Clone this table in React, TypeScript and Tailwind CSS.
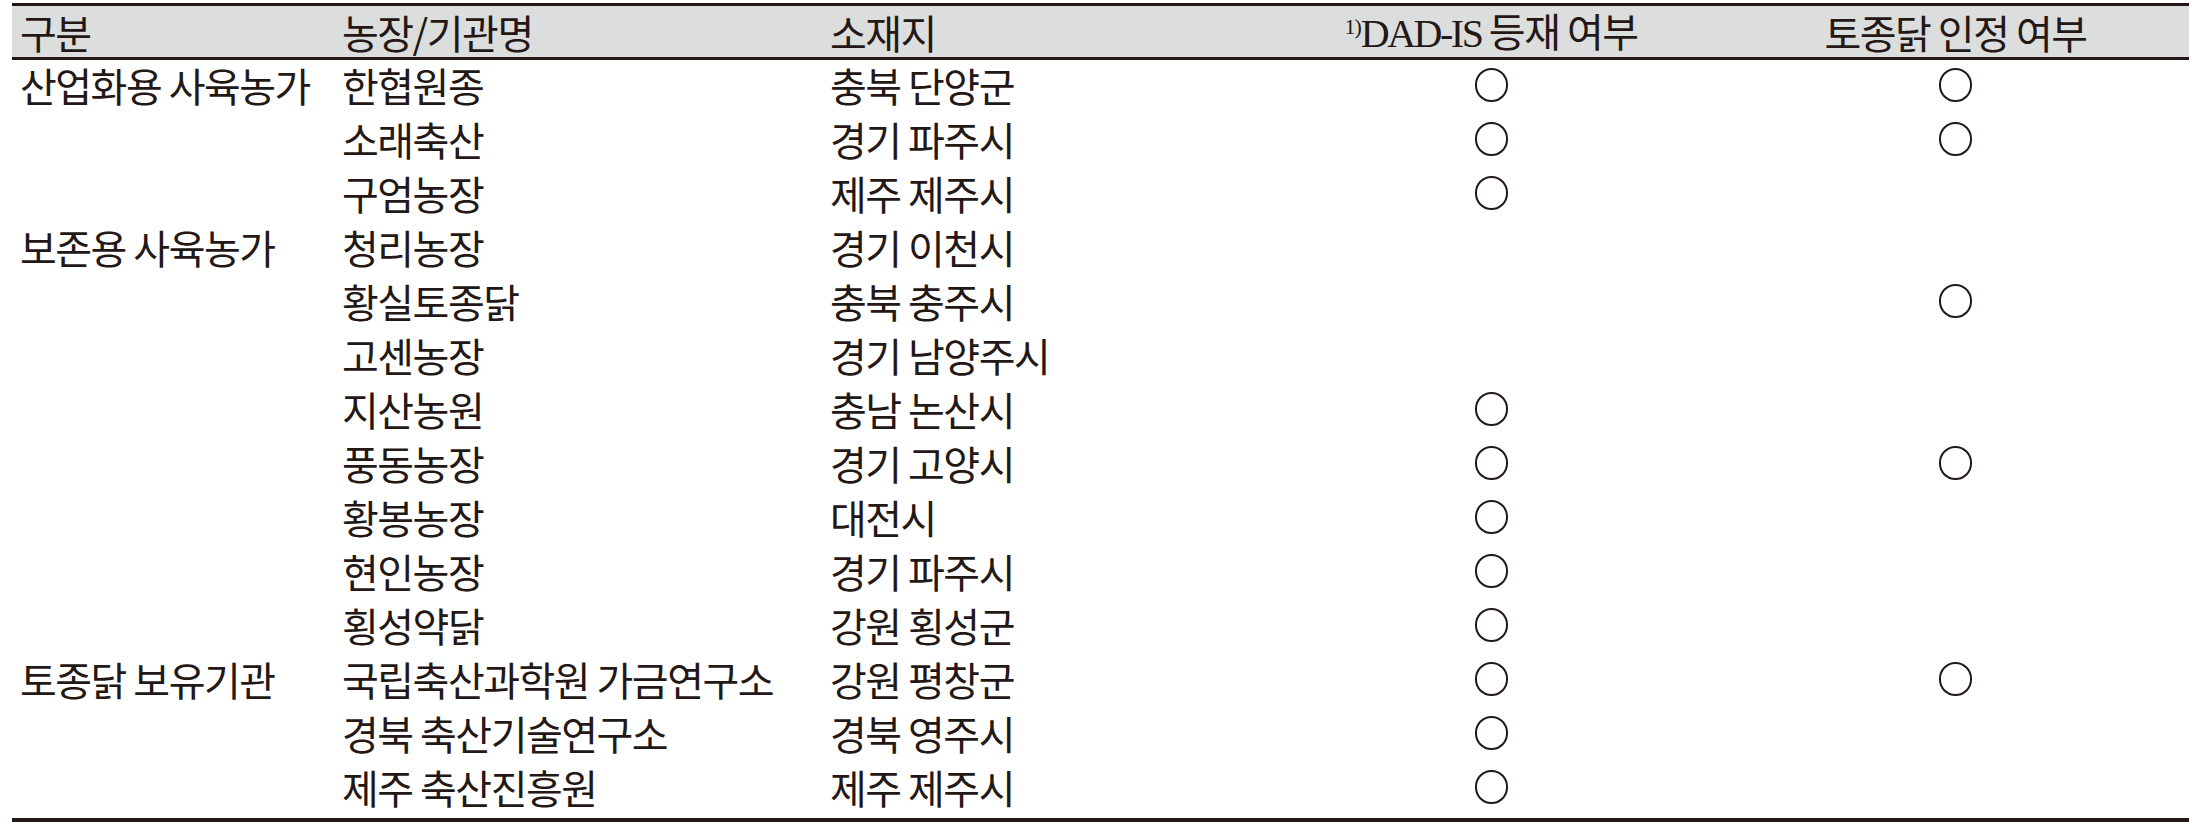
const rows: [string, string, string, boolean, boolean][] = [
  ["산업화용 사육농가", "한협원종", "충북 단양군", true, true],
  ["", "소래축산", "경기 파주시", true, true],
  ["", "구엄농장", "제주 제주시", true, false],
  ["보존용 사육농가", "청리농장", "경기 이천시", false, false],
  ["", "황실토종닭", "충북 충주시", false, true],
  ["", "고센농장", "경기 남양주시", false, false],
  ["", "지산농원", "충남 논산시", true, false],
  ["", "풍동농장", "경기 고양시", true, true],
  ["", "황봉농장", "대전시", true, false],
  ["", "현인농장", "경기 파주시", true, false],
  ["", "횡성약닭", "강원 횡성군", true, false],
  ["토종닭 보유기관", "국립축산과학원 가금연구소", "강원 평창군", true, true],
  ["", "경북 축산기술연구소", "경북 영주시", true, false],
  ["", "제주 축산진흥원", "제주 제주시", true, false],
];

const cols = "grid grid-cols-[322px_488px_438px_462px_1fr]";

const Circle = () => (
  <span className="block w-[33px] h-[34px] rounded-full border-2 border-[#231815]" />
);

export default function App() {
  return (
    <div className="w-[2198px] h-[826px] bg-white font-['Noto_Sans_CJK_KR',sans-serif] text-[40px] text-[#231815] tracking-[-1.5px]">
      <div className="ml-[12px] mr-[9px] pt-[3px]">
        {/* header */}
        <div
          className={`${cols} h-[57px] bg-[#dcdddd] border-t-[3px] border-b-[3px] border-[#231815] leading-none items-center`}
        >
          <div className="pl-2">구분</div>
          <div className="pl-2">농장/기관명</div>
          <div className="pl-2">소재지</div>
          <div className="text-center whitespace-nowrap">
            <span className="relative -top-[13px] text-[22px] font-['Liberation_Serif',serif] tracking-[-1px]">
              1)
            </span>
            <span className="font-['Liberation_Serif',serif] text-[40px] tracking-[-2.5px]">DAD-IS</span> 등재 여부
          </div>
          <div className="text-center">토종닭 인정 여부</div>
        </div>
        {/* body */}
        <div className="pb-[2px] border-b-4 border-[#231815]">
          {rows.map(([group, name, place, dad, native], i) => (
            <div key={i} className={`${cols} h-[54px] items-center leading-none pb-[4px]`}>
              <div className="pl-2 whitespace-nowrap">{group}</div>
              <div className="pl-2 whitespace-nowrap">{name}</div>
              <div className="pl-2 whitespace-nowrap">{place}</div>
              <div className="flex justify-center">{dad && <Circle />}</div>
              <div className="flex justify-center">{native && <Circle />}</div>
            </div>
          ))}
        </div>
      </div>
    </div>
  );
}
